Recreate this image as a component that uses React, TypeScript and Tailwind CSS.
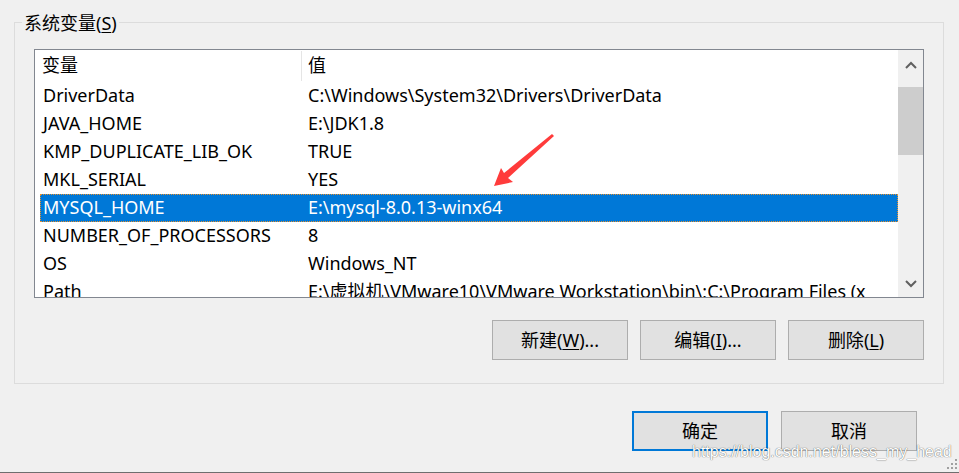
import React from "react";

type Row = { name: string; value: string };

const rows: Row[] = [
  { name: "DriverData", value: "C:\\Windows\\System32\\Drivers\\DriverData" },
  { name: "JAVA_HOME", value: "E:\\JDK1.8" },
  { name: "KMP_DUPLICATE_LIB_OK", value: "TRUE" },
  { name: "MKL_SERIAL", value: "YES" },
  { name: "MYSQL_HOME", value: "E:\\mysql-8.0.13-winx64" },
  { name: "NUMBER_OF_PROCESSORS", value: "8" },
  { name: "OS", value: "Windows_NT" },
  { name: "Path", value: "E:\\虚拟机\\VMware10\\VMware Workstation\\bin\\;C:\\Program Files (x" },
];

const selected = 4;

function Chevron({ up }: { up?: boolean }) {
  return (
    <svg width="12" height="8" viewBox="0 0 12 8">
      <path
        d={up ? "M1 7 L6 2 L11 7" : "M1 1 L6 6 L11 1"}
        fill="none"
        stroke="#606060"
        strokeWidth="2"
      />
    </svg>
  );
}

function Btn({ label, u, after, primary }: { label: string; u?: string; after?: string; primary?: boolean }) {
  return (
    <button
      className={
        "w-[136px] h-[40px] bg-[#e1e1e1] text-[18px] text-black flex items-center justify-center " +
        (primary ? "border-2 border-[#0078d7]" : "border border-[#adadad]")
      }
    >
      {label}
      {u && (
        <>
          (<span className="underline underline-offset-2">{u}</span>){after}
        </>
      )}
    </button>
  );
}

export default function App() {
  return (
    <div className="relative w-[959px] h-[473px] overflow-hidden bg-[#f0f0f0] border-b border-[#6e6e6e] font-['Noto_Sans','Noto_Sans_CJK_SC',sans-serif] text-black">
      <div className="pt-[22px] pl-[14px]">
        <div className="relative w-[930px] h-[362px] border border-[#dcdcdc]">
          <div className="absolute left-[7px] top-[-12px] px-[2px] bg-[#f0f0f0] text-[18px] leading-[24px]">
            系统变量(<span className="underline underline-offset-2">S</span>)
          </div>

          {/* list view */}
          <div className="ml-[19px] mt-[26px] w-[890px] h-[249px] border border-[#828790] bg-white flex">
            <div className="w-[863px] overflow-hidden text-[18px]">
              <div className="h-[32px] flex items-center pb-px">
                <div className="w-[266px] pl-[7px]">变量</div>
                <div className="w-px h-[30px] bg-[#e5e5e5]" />
                <div className="pl-[6px]">值</div>
              </div>
              {rows.map((r, i) => (
                <div
                  key={r.name}
                  className={
                    "ml-[5px] h-[28px] flex items-center whitespace-nowrap pb-[2px] " +
                    (i === selected
                      ? "bg-[#0078d7] text-white outline-1 outline-dotted outline-[#e8902c] -outline-offset-1"
                      : "")
                  }
                >
                  <div className="w-[268px] pl-[3px]">{r.name}</div>
                  <div>{r.value}</div>
                </div>
              ))}
            </div>
            <div className="w-[25px] bg-[#f0f0f0] flex flex-col">
              <div className="h-[37px] flex justify-center pt-[11px]">
                <Chevron up />
              </div>
              <div className="h-[68px] bg-[#cdcdcd]" />
              <div className="flex-1" />
              <div className="h-[37px] flex justify-center items-end pb-[9px]">
                <Chevron />
              </div>
            </div>
          </div>

          <div className="mt-[22px] pr-[19px] flex justify-end gap-[12px]">
            <Btn label="新建" u="W" after="..." />
            <Btn label="编辑" u="I" after="..." />
            <Btn label="删除" u="L" />
          </div>
        </div>
      </div>

      <div className="mt-[27px] pr-[42px] flex justify-end gap-[13px]">
        <Btn label="确定" primary />
        <Btn label="取消" />
      </div>

      {/* red annotation arrow */}
      <svg className="absolute left-0 top-0" width="959" height="473">
        <polygon
          points="494,186 513,182 508,178 554,136 552,134 504,173 501,168"
          fill="#ff3b3b"
        />
      </svg>

      {/* watermark */}
      <div className="absolute left-[692px] top-[444px] text-[16px] leading-[16px] whitespace-nowrap font-['Liberation_Sans',sans-serif] text-white [text-shadow:0_0_1px_rgba(0,0,0,0.55),0_0_1px_rgba(0,0,0,0.35)]">
        https://blog.csdn.net/bless_my_head
      </div>

      {/* size grip */}
      <svg className="absolute right-[1px] bottom-[2px]" width="11" height="11">
        {[
          [8, 0], [8, 4], [4, 4], [8, 8], [4, 8], [0, 8],
        ].map(([x, y], i) => (
          <rect key={i} x={x} y={y} width="2" height="2" fill="#a0a0a0" />
        ))}
      </svg>
    </div>
  );
}
